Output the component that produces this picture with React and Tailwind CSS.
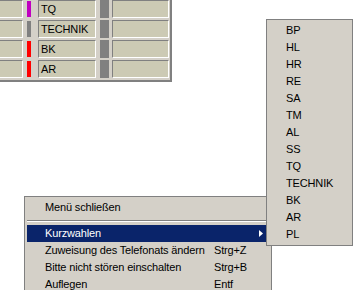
import React from "react";

const rows = [
  { name: "TQ", color: "bg-[#c000c0]" },
  { name: "TECHNIK", color: "bg-[#808080]" },
  { name: "BK", color: "bg-[#ff0000]" },
  { name: "AR", color: "bg-[#ff0000]" },
];

const subItems = ["BP", "HL", "HR", "RE", "SA", "TM", "AL", "SS", "TQ", "TECHNIK", "BK", "AR", "PL"];

const cell =
  "h-[18px] bg-[#cccab4] border-t border-l border-b border-r border-t-[#808080] border-l-[#808080] border-b-white border-r-white";

function MenuItem({ label, shortcut, active, arrow }) {
  return (
    <div
      className={
        "flex items-center h-[17px] pl-[18px] " +
        (active ? "bg-[#0a246a] text-white" : "text-black")
      }
    >
      <span className="w-[169px] whitespace-nowrap">{label}</span>
      <span className="flex-1 whitespace-nowrap">{shortcut}</span>
      {arrow && (
        <svg width="4" height="7" viewBox="0 0 4 7" className="mr-[6px]">
          <polygon points="0,0 4,3.5 0,7" fill="#ffffff" />
        </svg>
      )}
    </div>
  );
}

export default function App() {
  return (
    <div
      className="relative w-[358px] h-[290px] overflow-hidden bg-white text-[11px] leading-none tracking-[-0.15px]"
      style={{ fontFamily: '"Liberation Sans", Arial, sans-serif' }}
    >
      {/* table */}
      <div className="w-[172px] bg-[#d4d0c8] border-r-2 border-b-2 border-[#808080] pb-[2px]">
        <div className="flex flex-col gap-[2px]">
          {rows.map((r) => (
            <div key={r.name} className="flex h-[18px]">
              <div className={cell + " w-[23px] border-l-0"} />
              <div className={"ml-[4px] w-[4px] h-[16px] mt-[1px] " + r.color} />
              <div className={cell + " ml-[7px] w-[58px] flex items-center pl-[2px] text-black"}>
                {r.name}
              </div>
              <div className="ml-[4px] w-[9px] h-[18px] bg-[#808080]" />
              <div className={cell + " ml-[3px] w-[57px]"} />
            </div>
          ))}
        </div>
      </div>

      {/* main context menu */}
      <div className="absolute left-[24px] top-[196px] w-[248px] bg-[#d4d0c8] border border-[#808080] p-[2px]">
        <MenuItem label="Menü schließen" />
        <div className="h-[9px] pt-[4px]">
          <div className="border-t border-b border-t-[#808080] border-b-white" />
        </div>
        <MenuItem label="Kurzwahlen" active arrow />
        <MenuItem label="Zuweisung des Telefonats ändern" shortcut="Strg+Z" />
        <MenuItem label="Bitte nicht stören einschalten" shortcut="Strg+B" />
        <MenuItem label="Auflegen" shortcut="Entf" />
      </div>

      {/* submenu */}
      <div className="absolute left-[266px] top-[19px] w-[87px] bg-[#d4d0c8] border border-[#808080] p-[2px]">
        {subItems.map((s, i) => (
          <div key={i} className="h-[17px] flex items-center pl-[17px] text-black">
            {s}
          </div>
        ))}
      </div>
    </div>
  );
}
